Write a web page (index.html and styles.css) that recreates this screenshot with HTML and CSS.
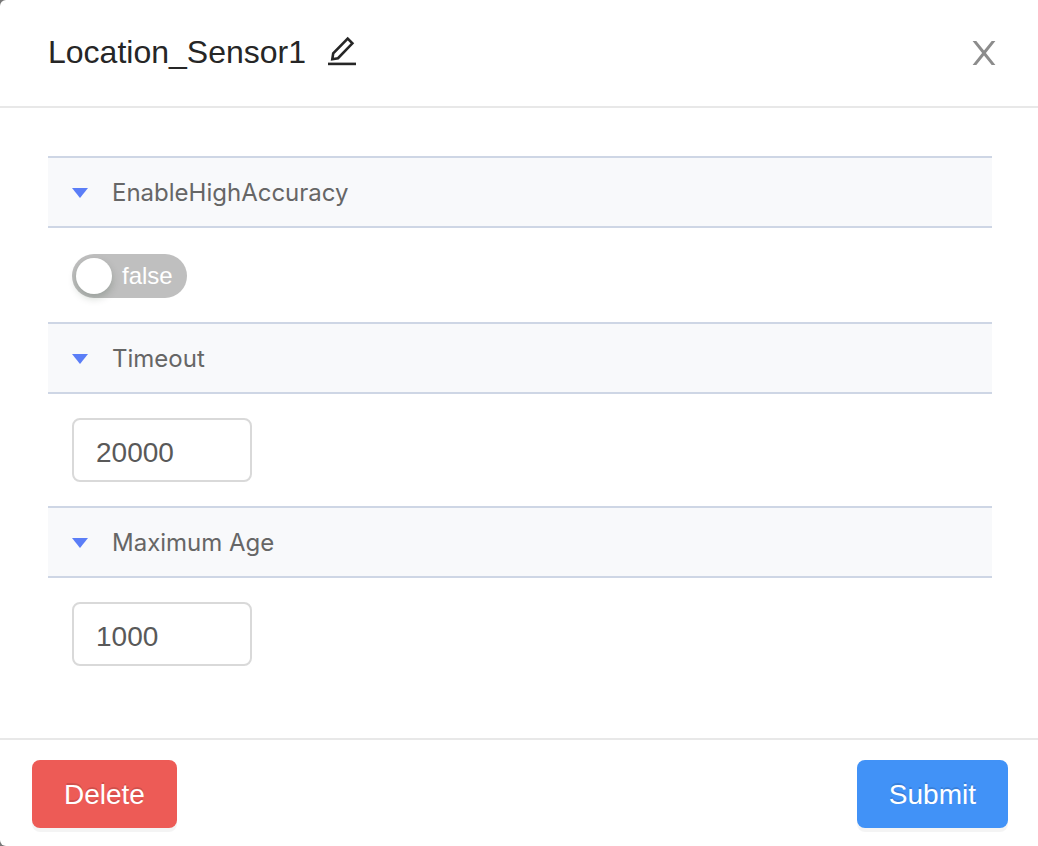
FILE: index.html
```html
<!DOCTYPE html>
<html lang="en">
<head>
  <meta charset="utf-8">
  <title>Location_Sensor1</title>
  <link rel="stylesheet" href="styles.css">
</head>
<body>
  <form class="dialog" role="dialog" aria-labelledby="dialog-title">
    <header class="dialog-header">
      <h1 class="dialog-title" id="dialog-title">Location_Sensor1</h1>
      <button class="icon-button" type="button" aria-label="Rename">
        <svg class="icon-edit" viewBox="0 0 32 32" aria-hidden="true">
          <path d="M6.3 24.2 7.2 18.4 21.7 3.6 26.4 8.3 12 23.2Z" fill="none" stroke="currentColor" stroke-width="2.6" stroke-linejoin="miter"/>
          <rect x="2" y="27.6" width="28" height="2.6" fill="currentColor"/>
        </svg>
      </button>
      <button class="icon-button close-button" type="button" aria-label="Close">
        <svg class="icon-close" viewBox="0 0 24 24" aria-hidden="true">
          <path d="M.6 0H4.3L12 9.6 19.7 0H23.4L13.9 12 23.4 24H19.7L12 14.4 4.3 24H.6L10.1 12Z" fill="currentColor"/>
        </svg>
      </button>
    </header>

    <main class="dialog-body">
      <section class="property">
        <h2 class="property-heading">
          <button class="property-toggle" type="button" aria-expanded="true"><span class="caret"></span><span id="label-accuracy">EnableHighAccuracy</span></button>
        </h2>
        <div class="property-content switch-content">
          <label class="switch">
            <input class="switch-input" type="checkbox" role="switch" aria-labelledby="label-accuracy">
            <span class="switch-text">false</span>
          </label>
        </div>
      </section>
      <section class="property">
        <h2 class="property-heading">
          <button class="property-toggle" type="button" aria-expanded="true"><span class="caret"></span><span id="label-timeout">Timeout</span></button>
        </h2>
        <div class="property-content">
          <input class="number-input" type="text" inputmode="numeric" value="20000" aria-labelledby="label-timeout">
        </div>
      </section>
      <section class="property">
        <h2 class="property-heading">
          <button class="property-toggle" type="button" aria-expanded="true"><span class="caret"></span><span id="label-age">Maximum Age</span></button>
        </h2>
        <div class="property-content">
          <input class="number-input" type="text" inputmode="numeric" value="1000" aria-labelledby="label-age">
        </div>
      </section>
    </main>

    <footer class="dialog-footer">
      <button class="button button-danger" type="button">Delete</button>
      <button class="button button-primary" type="submit">Submit</button>
    </footer>
  </form>
</body>
</html>
```

FILE: styles.css
```css
* {
  box-sizing: border-box;
}

body {
  margin: 0;
  background: #777;
  font-family: "Liberation Sans", Arial, sans-serif;
}

button,
input {
  margin: 0;
  font-family: inherit;
}

button {
  padding: 0;
  border: 0;
  background: none;
  cursor: pointer;
}

.dialog {
  display: flex;
  flex-direction: column;
  min-height: 100vh;
  background: #fff;
  border-radius: 6px 0 0 6px;
}

.dialog-header {
  display: flex;
  align-items: flex-start;
  gap: 20px;
  padding: 30px 40px 32px 48px;
  border-bottom: 2px solid #e8e8e8;
}

.dialog-title {
  margin: 0;
  color: #262626;
  font-size: 32px;
  font-weight: 400;
  line-height: 44px;
}

.icon-button {
  display: flex;
  padding-top: 5px;
  color: #262626;
}

.icon-edit {
  width: 32px;
  height: 32px;
}

.close-button {
  margin-left: auto;
  padding: 11px 2px 0;
  color: #8c8c8c;
}

.icon-close {
  width: 24px;
  height: 24px;
}

.dialog-body {
  flex: 1;
  padding: 48px 46px 48px 48px;
}

.property-heading {
  margin: 0;
  font-size: 24px;
  font-weight: 400;
}

.property-toggle {
  display: flex;
  align-items: center;
  gap: 24px;
  width: 100%;
  padding: 19px 24px 17px;
  border: solid #ced6e5;
  border-width: 2px 0;
  background: #f8f9fb;
  color: #666;
  font-family: Inter, sans-serif;
  font-size: 24px;
  line-height: 32px;
  text-align: left;
}

.caret {
  width: 16px;
  height: 10px;
  background: #5b7ef7;
  clip-path: polygon(0 0, 100% 0, 50% 100%);
}

.property-content {
  display: flex;
  padding: 24px;
}

.switch-content {
  padding-top: 26px;
}

.switch {
  display: flex;
  align-items: center;
  gap: 10px;
  height: 44px;
  padding: 0 14px 0 4px;
  border-radius: 22px;
  background: #bfbfbf;
  cursor: pointer;
}

.switch-input {
  width: 36px;
  height: 36px;
  border-radius: 50%;
  background: #fff;
  box-shadow: 0 4px 8px rgba(0, 35, 11, 0.2);
  appearance: none;
}

.switch-text {
  color: #fff;
  font-size: 24px;
  line-height: 44px;
}

.number-input {
  width: 180px;
  height: 64px;
  padding: 6px 22px 0;
  border: 2px solid #d9d9d9;
  border-radius: 8px;
  background: #fff;
  color: #595959;
  font-size: 28px;
}

.dialog-footer {
  display: flex;
  justify-content: space-between;
  padding: 20px 30px 18px 32px;
  border-top: 2px solid #e8e8e8;
}

.button {
  padding: 2px 32px 0;
  border-radius: 8px;
  box-shadow: 0 4px 0 rgba(0, 0, 0, 0.045);
  color: #fff;
  font-size: 28px;
  line-height: 66px;
  text-shadow: 0 -2px 0 rgba(0, 0, 0, 0.12);
}

.button-danger {
  background: #ed5b56;
}

.button-primary {
  background: #4192f7;
}
```
